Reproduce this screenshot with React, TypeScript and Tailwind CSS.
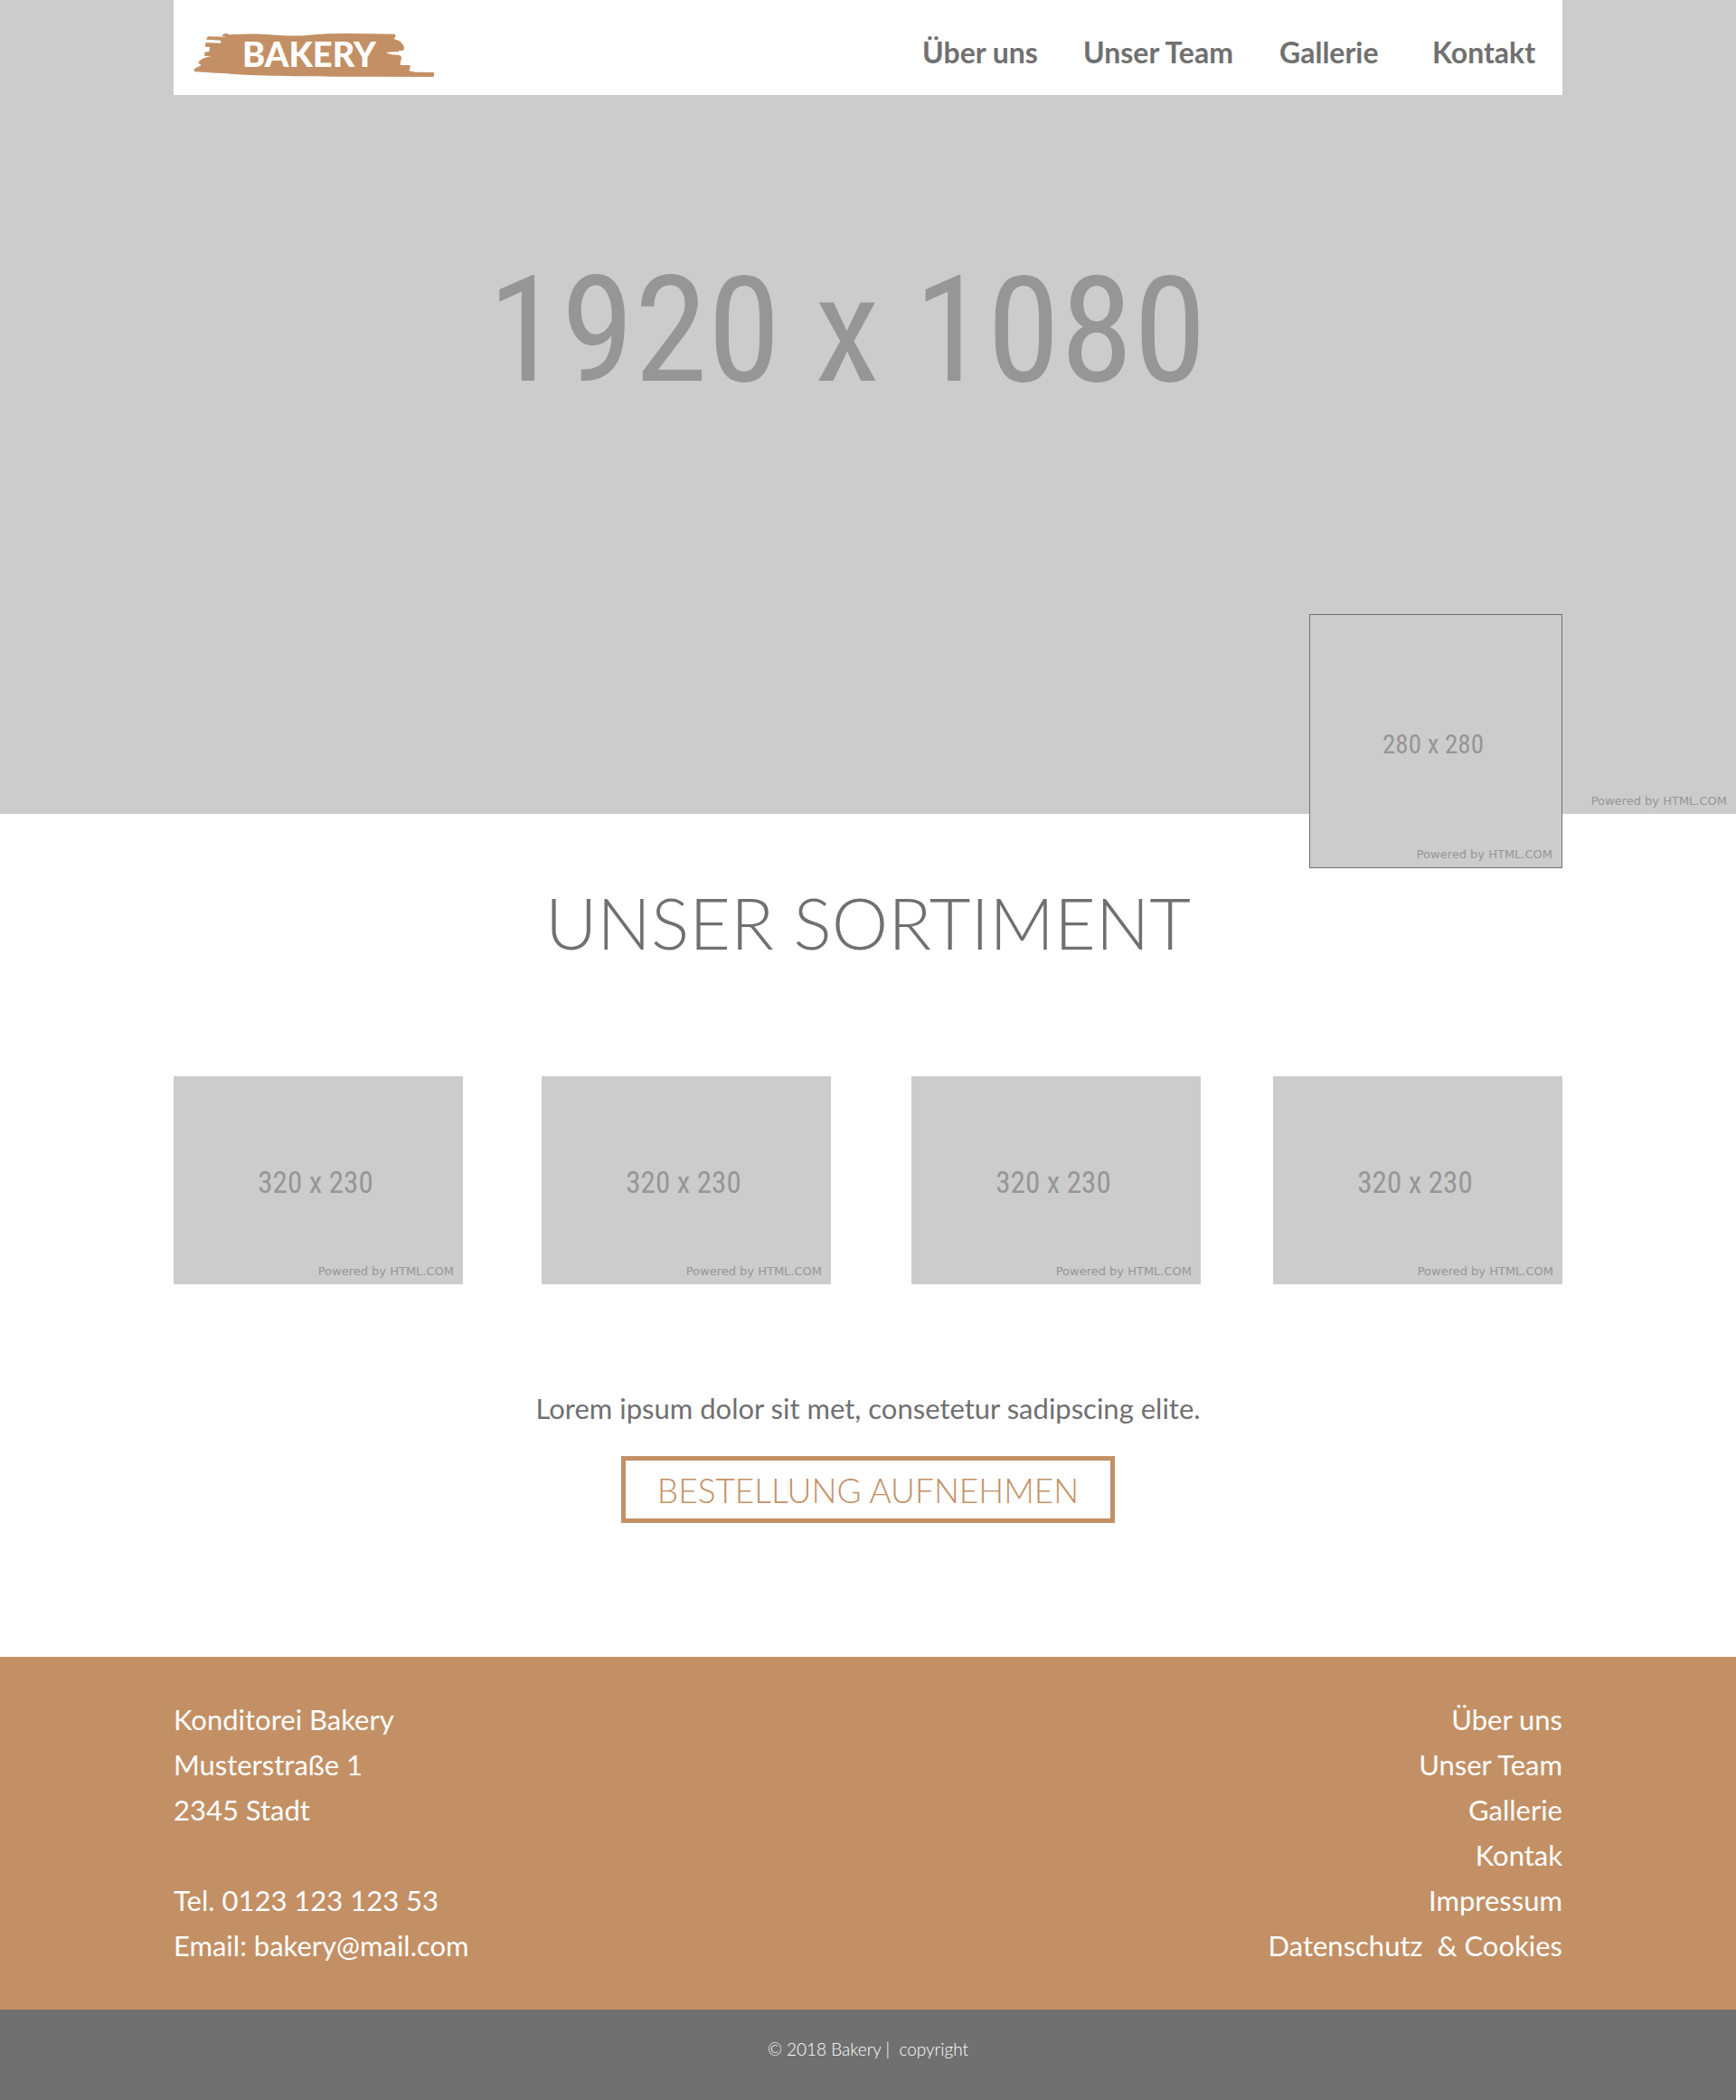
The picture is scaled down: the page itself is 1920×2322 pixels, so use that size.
const navLinks = ['Über uns', 'Unser Team', 'Gallerie', 'Kontakt'];

const address = ['Konditorei Bakery', 'Musterstraße 1', '2345 Stadt', '', 'Tel. 0123 123 123 53'];

const footerLinks = ['Über uns', 'Unser Team', 'Gallerie', 'Kontak', 'Impressum', 'Datenschutz \u00a0& Cookies'];

const cardOffsets = ['', 'ml-[87px]', 'ml-[89px]', 'ml-auto'];

function PoweredBy() {
  return (
    <span className="absolute right-[10px] bottom-[6px] font-['DejaVu_Sans',sans-serif] text-[13px] leading-4 whitespace-nowrap">
      Powered by HTML.COM
    </span>
  );
}

function Logo() {
  return (
    <a href="#" aria-label="Bakery" className="relative ml-[22px] flex h-[50px] w-[267px]">
      <svg viewBox="72 108 800 150" className="absolute inset-0 h-full w-full" aria-hidden="true">
        <path
          fill="#c39065"
          d="M165 119 L173 112 L184 111 L188 115 C220 115 260 112 295 113 C350 115 400 122 450 117 C490 112 540 111 600 111 L741 113 L742 119 L737 129 L744 132 C755 134 764 142 768 151 C772 158 771 163 767 168 L753 168 L752 172 C735 172 722 172 711 175 C720 180 735 183 752 182 C759 184 763 188 761 194 L757 214 L761 216 L789 216 C793 222 790 229 786 234 C798 239 812 240 828 239 L868 240 C871 244 871 250 867 255 L640 254 C500 254 350 253 240 248 C180 244 120 241 78 238 C72 236 71 231 76 227 L96 217 L95 214 L87 210 C91 199 105 191 130 187 L107 185 L109 173 L123 171 L126 156 L110 155 L112 141 L162 143 L162 134 L113 131 L119 121 L181 122 Z"
        />
      </svg>
      <span className="relative ml-[54px] text-[38px] leading-[46px] font-black text-white">BAKERY</span>
    </a>
  );
}

export default function App() {
  return (
    <div className="bg-white font-[Lato,sans-serif] text-[#707070]">
      <div className="relative h-[900px] bg-[#cccccc] text-[#969696]">
        <header className="mx-auto flex h-[105px] w-4/5 items-start justify-between bg-white pt-[36px] text-[#707070]">
          <Logo />
          <nav className="grid grid-cols-[178px_217px_169px_144px] text-[32px] leading-[44px] font-bold">
            {navLinks.map((label) => (
              <a key={label} href="#" className="whitespace-nowrap">
                {label}
              </a>
            ))}
          </nav>
        </header>
        <p className="pt-[160px] pr-[46px] text-center font-['Roboto_Condensed','Liberation_Sans',sans-serif] text-[164px] leading-[200px]">
          1920 x 1080
        </p>
        <PoweredBy />
        <div className="absolute right-[10%] bottom-[-60px] flex h-[281px] w-[280px] items-center justify-center border border-[#707070] bg-[#cccccc]">
          <span className="pt-[6px] pr-[6px] font-['Roboto_Condensed','Liberation_Sans',sans-serif] text-[29px] leading-9">
            280 x 280
          </span>
          <PoweredBy />
        </div>
      </div>

      <main className="mx-auto flex w-4/5 flex-col items-center pb-[148px]">
        <h1 className="mt-[74px] text-[79px] leading-[92px] font-light">UNSER SORTIMENT</h1>
        <div className="mt-[124px] flex w-full text-[#969696]">
          {cardOffsets.map((offset) => (
            <div
              key={offset}
              className={`relative flex h-[230px] w-[320px] items-center justify-center bg-[#cccccc] ${offset}`}
            >
              <span className="pt-[6px] pr-[6px] font-['Roboto_Condensed','Liberation_Sans',sans-serif] text-[33px] leading-10">
                320 x 230
              </span>
              <PoweredBy />
            </div>
          ))}
        </div>
        <p className="mt-[119px] text-[31px] leading-[36px]">Lorem ipsum dolor sit met, consetetur sadipscing elite.</p>
        <button
          type="button"
          className="mt-[35px] h-[74px] w-[546px] border-[5px] border-[#c39065] pt-[2px] text-[37px] leading-[44px] font-light text-[#c39065]"
        >
          BESTELLUNG AUFNEHMEN
        </button>
      </main>

      <footer className="text-white">
        <div className="bg-[#c39065]">
          <div className="mx-auto flex w-4/5 justify-between pt-[44px] pb-[46px] text-[31px] leading-[50px]">
            <address className="not-italic">
              {address.map((line, i) => (
                <p key={i} className="h-[50px]">
                  {line}
                </p>
              ))}
              <p>
                Email: <a href="mailto:bakery@mail.com">bakery@mail.com</a>
              </p>
            </address>
            <nav className="flex flex-col items-end">
              {footerLinks.map((label) => (
                <a key={label} href="#">
                  {label}
                </a>
              ))}
            </nav>
          </div>
        </div>
        <p className="bg-[#707070] pt-[29px] pb-[41px] text-center text-[19px] leading-[30px] font-light">
          © 2018 Bakery | &nbsp;copyright
        </p>
      </footer>
    </div>
  );
}
